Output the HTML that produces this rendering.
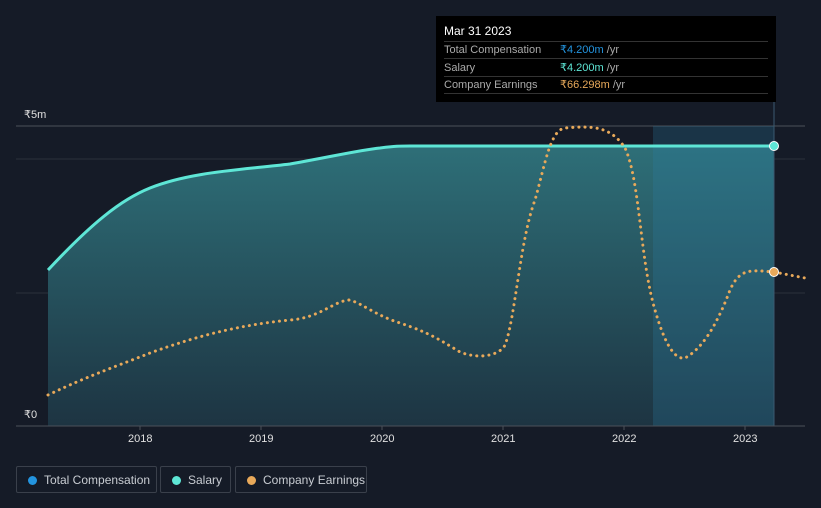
<!DOCTYPE html><html><head><style>
html,body{margin:0;width:821px;height:508px;overflow:hidden}
body{background:#151b27;font-family:"Liberation Sans",sans-serif;position:relative}
.t{position:absolute;color:#e0e0e0;font-size:11px}
.leg{position:absolute;top:466px;height:27px;border:1px solid #3a404b;border-radius:2px;color:#c8ccd2;font-size:12px;line-height:26px;box-sizing:border-box;white-space:nowrap}
.leg i{position:absolute;left:11px;top:9px;width:9px;height:9px;border-radius:50%}
.r{position:absolute;left:8px;right:8px;border-top:1px solid #333}
</style></head><body>
<svg width="821" height="508" style="position:absolute;left:0;top:0">
<defs><linearGradient id="g" x1="0" y1="0" x2="0" y2="1"><stop offset="0" stop-color="#2e6f78"/><stop offset="1" stop-color="#1d3442"/></linearGradient></defs>
<line x1="16" y1="126" x2="805" y2="126" stroke="#4a505a"/>
<line x1="16" y1="159" x2="805" y2="159" stroke="#2a303b"/>
<line x1="16" y1="293" x2="805" y2="293" stroke="#2a303b"/>
<path d="M48,270 C90,225 120,200 150,188 C190,172 240,170 290,164 C330,157 360,150 380,148 C395,146 400,146 410,146 L774,146 L774,426 L48,426Z" fill="url(#g)"/>
<rect x="653" y="126" width="121" height="300" fill="#2b80a8" opacity="0.25"/>
<line x1="774" y1="100" x2="774" y2="426" stroke="#3a5a70"/>
<path d="M48,270 C90,225 120,200 150,188 C190,172 240,170 290,164 C330,157 360,150 380,148 C395,146 400,146 410,146 L774,146" fill="none" stroke="#5ee6d6" stroke-width="3"/>
<path d="M48,395 C90,375 120,365 150,353 C200,335 240,325 290,320 C320,318 335,300 350,300 C365,305 375,315 400,323 C430,333 440,340 460,352 C480,360 500,355 505,345 C515,320 520,240 535,200 C545,165 550,130 565,128 C590,126 610,125 625,148 C640,180 640,260 655,310 C665,345 675,360 685,358 C700,350 715,330 730,290 C740,268 750,270 774,272 L805,278" fill="none" stroke="#e8a95a" stroke-width="3" stroke-dasharray="0.1 6" stroke-linecap="round"/>
<circle cx="774" cy="146" r="4.5" fill="#5ee6d6" stroke="#fff" stroke-width="1"/>
<circle cx="774" cy="272" r="4.5" fill="#e8a95a" stroke="#fff" stroke-width="1"/>
<line x1="16" y1="426" x2="805" y2="426" stroke="#4a505a"/>
<g stroke="#4a505a"><line x1="140" y1="426" x2="140" y2="430"/><line x1="261" y1="426" x2="261" y2="430"/><line x1="382" y1="426" x2="382" y2="430"/><line x1="503" y1="426" x2="503" y2="430"/><line x1="624" y1="426" x2="624" y2="430"/><line x1="745" y1="426" x2="745" y2="430"/></g>
</svg>
<div class="t" style="left:24px;top:108px">₹5m</div>
<div class="t" style="left:24px;top:408px">₹0</div>
<div class="t" style="left:128px;top:433px">2018</div>
<div class="t" style="left:249px;top:433px">2019</div>
<div class="t" style="left:370px;top:433px">2020</div>
<div class="t" style="left:491px;top:433px">2021</div>
<div class="t" style="left:612px;top:433px">2022</div>
<div class="t" style="left:733px;top:433px">2023</div>
<div style="position:absolute;left:436px;top:16px;width:340px;height:86px;background:#000;font-size:11px">
<div style="position:absolute;left:8px;top:8px;color:#fff;font-size:12px">Mar 31 2023</div>
<div class="r" style="top:25px"></div>
<div class="r" style="top:42px"></div>
<div class="r" style="top:60px"></div>
<div class="r" style="top:77px"></div>
<div style="position:absolute;left:8px;top:26px;color:#aaa;line-height:17.5px">Total Compensation<br>Salary<br>Company Earnings</div>
<div style="position:absolute;left:124px;top:26px;color:#aaa;line-height:17.5px"><span style="color:#2394df">₹4.200m</span> /yr<br><span style="color:#5ee6d6">₹4.200m</span> /yr<br><span style="color:#e8a95a">₹66.298m</span> /yr</div>
</div>
<div class="leg" style="left:16px;width:141px;padding-left:27px"><i style="background:#2394df"></i>Total Compensation</div>
<div class="leg" style="left:160px;width:71px;padding-left:27px"><i style="background:#5ee6d6"></i>Salary</div>
<div class="leg" style="left:235px;width:132px;padding-left:27px"><i style="background:#e8a95a"></i>Company Earnings</div>
</body></html>
